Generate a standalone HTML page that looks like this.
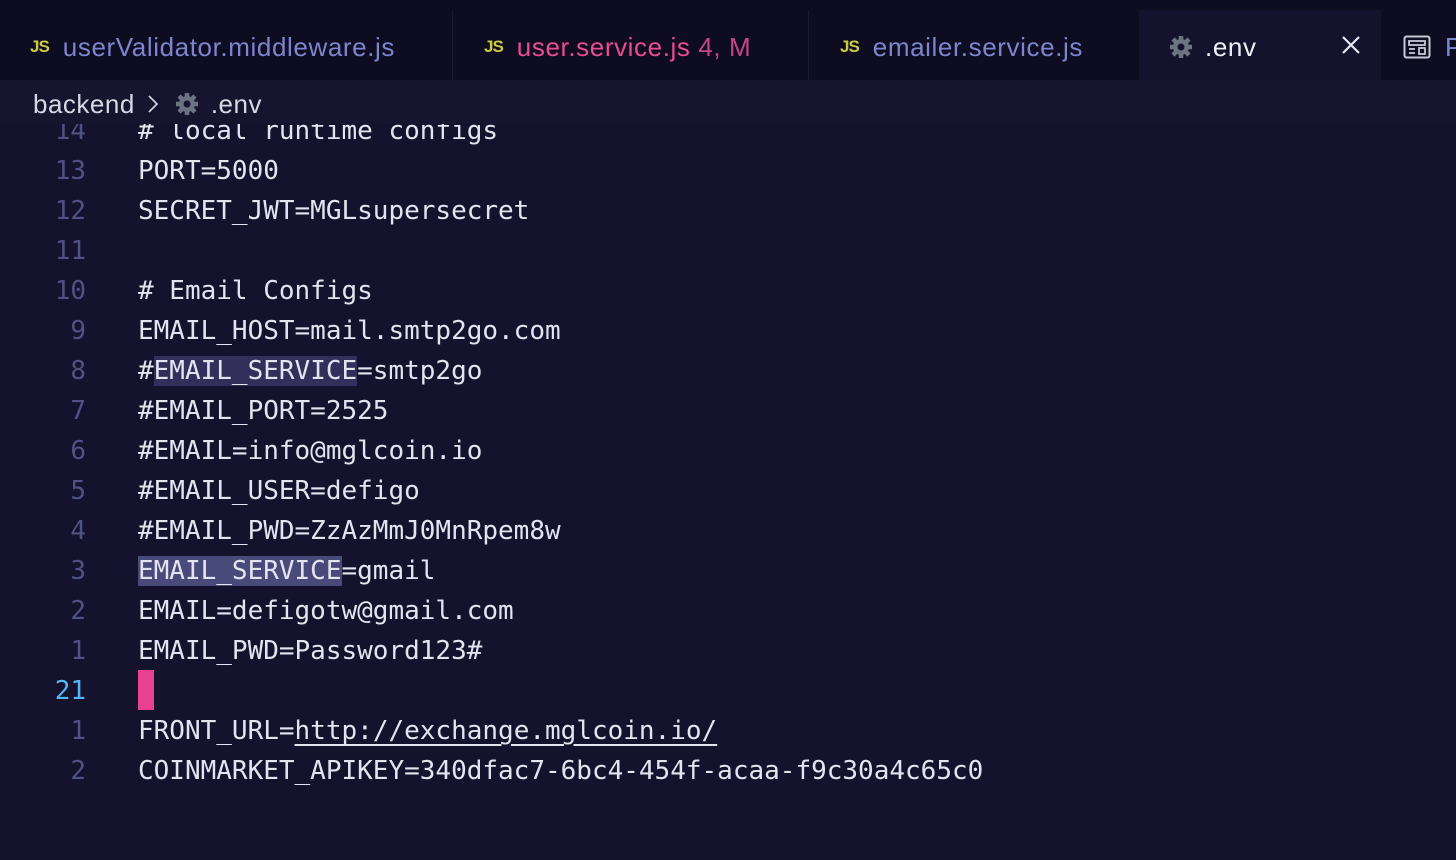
<!DOCTYPE html>
<html><head><meta charset="utf-8"><style>
*{margin:0;padding:0;box-sizing:border-box}
body{width:1456px;height:860px;overflow:hidden;background:#15122d;font-family:"Liberation Sans",sans-serif;position:relative}
.tabbar{position:absolute;left:0;top:0;width:1456px;height:80px;background:#0e0c20}
.tab{position:absolute;top:12px;height:70px;display:flex;align-items:center;font-size:26px;letter-spacing:0.6px;color:#7d85cf}
.sep{position:absolute;top:10px;width:1px;height:70px;background:#1a1733}
.js{font-size:17px;font-weight:bold;color:#cbcb41;margin-right:14px;letter-spacing:-1px}
.active{background:#15122d;color:#eeeef5;top:10px;padding-top:4px}
.bc{position:absolute;left:0;top:80px;width:1456px;height:44px;background:#17142f;z-index:2;display:flex;align-items:center;padding-left:33px;padding-top:4px;font-size:26px;letter-spacing:0.5px;color:#d8d8e4}
.code{position:absolute;left:0;top:111px;width:1456px;font-family:"DejaVu Sans Mono",monospace;font-size:26px;color:#e4e4f0}
.ln{height:40px;line-height:40px;position:relative;white-space:pre}
.n{position:absolute;right:1370px;color:#4f5282;text-align:right}
.t{position:absolute;left:138px}
.sel{background:#32305a}
.sel2{background:#484b7a}
</style></head><body>
<div class="tabbar">
<div class="tab" style="left:30px"><span class="js">JS</span>userValidator.middleware.js</div>
<div class="sep" style="left:452px"></div>
<div class="tab" style="left:484px;color:#ea4c8f"><span class="js">JS</span>user.service.js&nbsp;<span style="color:#c64588">4, M</span></div>
<div class="sep" style="left:808px"></div>
<div class="tab" style="left:840px"><span class="js">JS</span>emailer.service.js</div>
<div class="tab active" style="left:1139px;width:242px;padding-left:30px">
<svg width="24" height="24" viewBox="0 0 24 24" style="margin-right:12px"><g fill="#6b7480"><circle cx="12" cy="12" r="8"/><g stroke="#6b7480" stroke-width="4.5"><line x1="12" y1="1" x2="12" y2="23"/><line x1="1" y1="12" x2="23" y2="12"/><line x1="4" y1="4" x2="20" y2="20"/><line x1="20" y1="4" x2="4" y2="20"/></g></g><circle cx="12" cy="12" r="3.5" fill="#15122d"/></svg>.env
<svg width="20" height="20" viewBox="0 0 20 20" style="position:absolute;left:202px;top:25px"><path d="M2 2L18 18M18 2L2 18" stroke="#e8e8f0" stroke-width="2.2"/></svg></div>
<div class="tab" style="left:1403px"><svg width="28" height="24" viewBox="0 0 28 24" style="margin-right:14px"><rect x="1.5" y="1.5" width="25" height="21" rx="2" fill="none" stroke="#c8c8d4" stroke-width="2"/><rect x="6" y="6" width="16" height="4" fill="none" stroke="#c8c8d4" stroke-width="1.8"/><line x1="6" y1="14" x2="12" y2="14" stroke="#c8c8d4" stroke-width="1.8"/><line x1="6" y1="18" x2="12" y2="18" stroke="#c8c8d4" stroke-width="1.8"/><rect x="16" y="13" width="6" height="6" fill="none" stroke="#c8c8d4" stroke-width="1.8"/></svg>P</div>
</div>
<div class="bc">backend<svg width="12" height="20" viewBox="0 0 12 20" style="margin:0 16px 0 12px"><path d="M2 2L10 10L2 18" fill="none" stroke="#d8d8e4" stroke-width="1.6"/></svg>
<svg width="24" height="24" viewBox="0 0 24 24" style="margin:0 12px 0 0"><g fill="#6b7480"><circle cx="12" cy="12" r="8"/><g stroke="#6b7480" stroke-width="4.5"><line x1="12" y1="1" x2="12" y2="23"/><line x1="1" y1="12" x2="23" y2="12"/><line x1="4" y1="4" x2="20" y2="20"/><line x1="20" y1="4" x2="4" y2="20"/></g></g><circle cx="12" cy="12" r="3.5" fill="#17142f"/></svg>.env</div>
<div class="code">
<div class="ln"><span class="n">14</span><span class="t"># local runtime configs</span></div>
<div class="ln"><span class="n">13</span><span class="t">PORT=5000</span></div>
<div class="ln"><span class="n">12</span><span class="t">SECRET_JWT=MGLsupersecret</span></div>
<div class="ln"><span class="n">11</span><span class="t"></span></div>
<div class="ln"><span class="n">10</span><span class="t"># Email Configs</span></div>
<div class="ln"><span class="n">9</span><span class="t">EMAIL_HOST=mail.smtp2go.com</span></div>
<div class="ln"><span class="n">8</span><span class="t">#<span class="sel">EMAIL_SERVICE</span>=smtp2go</span></div>
<div class="ln"><span class="n">7</span><span class="t">#EMAIL_PORT=2525</span></div>
<div class="ln"><span class="n">6</span><span class="t">#EMAIL=info@mglcoin.io</span></div>
<div class="ln"><span class="n">5</span><span class="t">#EMAIL_USER=defigo</span></div>
<div class="ln"><span class="n">4</span><span class="t">#EMAIL_PWD=ZzAzMmJ0MnRpem8w</span></div>
<div class="ln"><span class="n">3</span><span class="t"><span class="sel2">EMAIL_SERVICE</span>=gmail</span></div>
<div class="ln"><span class="n">2</span><span class="t">EMAIL=defigotw@gmail.com</span></div>
<div class="ln"><span class="n">1</span><span class="t">EMAIL_PWD=Password123#</span></div>
<div class="ln"><span class="n" style="color:#56b6f5">21</span><span class="t" style="top:-1px;width:16px;height:40px;background:#e8418f"></span></div>
<div class="ln"><span class="n">1</span><span class="t">FRONT_URL=<span style="text-decoration:underline;text-underline-offset:5px">http://exchange.mglcoin.io/</span></span></div>
<div class="ln"><span class="n">2</span><span class="t">COINMARKET_APIKEY=340dfac7-6bc4-454f-acaa-f9c30a4c65c0</span></div>
</div>
</body></html>
